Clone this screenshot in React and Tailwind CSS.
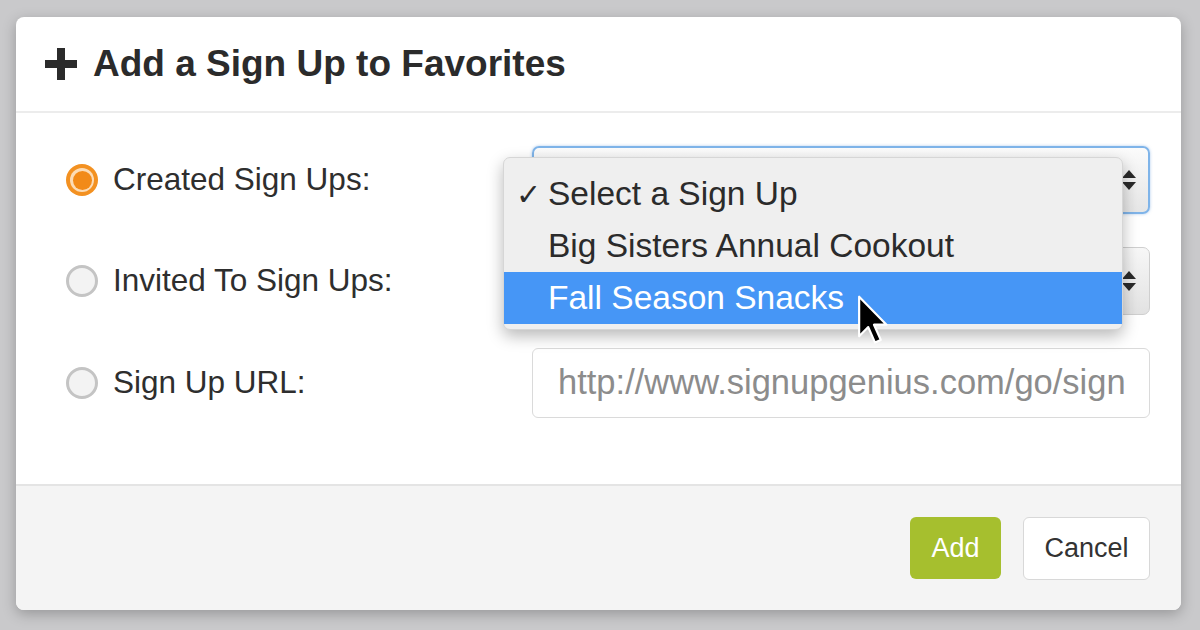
import React from "react";

const Arrows = () => (
  <svg width="16" height="22" viewBox="0 0 16 22" className="shrink-0">
    <path d="M8 1 L15 9 L1 9 Z" fill="#2a2a2a" />
    <path d="M1 13 L15 13 L8 21 Z" fill="#2a2a2a" />
  </svg>
);

const Radio = ({ checked }) =>
  checked ? (
    <div className="w-[32px] h-[32px] rounded-full bg-[#f39121] flex items-center justify-center shrink-0">
      <div className="w-[24px] h-[24px] rounded-full bg-[#fcdcb6] flex items-center justify-center">
        <div className="w-[19px] h-[19px] rounded-full bg-[#f28a18]" />
      </div>
    </div>
  ) : (
    <div className="w-[32px] h-[32px] rounded-full border-[3px] border-[#c4c4c4] bg-[#f3f3f3] shrink-0" />
  );

const Row = ({ checked, label, children }) => (
  <div className="flex items-center">
    <div className="w-[516px] pl-[50px] flex items-center gap-[15px]">
      <Radio checked={checked} />
      <span className="text-[31.5px] text-[#2e2e2e]">{label}</span>
    </div>
    <div className="w-[618px]">{children}</div>
  </div>
);

export default function App() {
  return (
    <div className="w-[1200px] h-[630px] bg-[#c9c9cb] pt-[17px] pl-[16px] font-['Liberation_Sans',Arial,sans-serif]">
      <div className="relative w-[1165px] h-[593px] bg-white rounded-[8px] shadow-[0_4px_14px_rgba(0,0,0,0.25)] flex flex-col overflow-hidden">
        {/* header */}
        <div className="h-[96px] shrink-0 border-b-2 border-[#ececec] flex items-center pl-[29px] gap-[16px]">
          <svg width="32" height="32" viewBox="0 0 32 32">
            <path d="M12 0 H20 V12 H32 V20 H20 V32 H12 V20 H0 V12 H12 Z" fill="#2b2b2b" />
          </svg>
          <h1 className="text-[37px] font-bold text-[#2b2b2b]">Add a Sign Up to Favorites</h1>
        </div>

        {/* body */}
        <div className="flex-1 flex flex-col gap-[33px] pt-[33px]">
          <Row checked label="Created Sign Ups:">
            <div className="h-[68px] rounded-[7px] border-2 border-[#7fb4e9] shadow-[0_0_3px_rgba(90,150,220,0.5)] bg-gradient-to-b from-[#fbfbfb] to-[#e6e6e6] flex items-center justify-end pr-[11px]">
              <Arrows />
            </div>
          </Row>
          <Row label="Invited To Sign Ups:">
            <div className="h-[68px] rounded-[7px] border border-[#cfcfcf] bg-gradient-to-b from-[#f7f7f7] to-[#e2e2e2] flex items-center justify-end pr-[12px]">
              <Arrows />
            </div>
          </Row>
          <Row label="Sign Up URL:">
            <div className="h-[70px] rounded-[6px] border border-[#dadada] bg-white flex items-center pl-[25px] pr-[24px] overflow-hidden">
              <span className="text-[34.5px] text-[#8c8c8c] whitespace-nowrap overflow-hidden">
                http://www.signupgenius.com/go/sign
              </span>
            </div>
          </Row>
        </div>

        {/* footer */}
        <div className="h-[126px] shrink-0 border-t-2 border-[#e4e4e4] bg-[#f4f4f4] flex items-center justify-end pr-[31px] gap-[22px]">
          <button className="w-[91px] h-[62px] rounded-[6px] bg-[#a6bf2e] text-white text-[27px]">Add</button>
          <button className="w-[127px] h-[63px] rounded-[6px] bg-white border border-[#d8d8d8] text-[#333] text-[27px]">
            Cancel
          </button>
        </div>

        {/* open dropdown menu */}
        <div className="absolute left-[487px] top-[140px] w-[620px] h-[173px] rounded-[7px] bg-[#efefef] border border-[#d6d6d6] shadow-[0_6px_16px_rgba(0,0,0,0.28)] pt-[10px] flex flex-col text-[33.5px] text-[#2b2b2b]">
          <div className="h-[52px] flex items-center">
            <span className="w-[44px] pl-[12px] text-[30px] font-bold font-['DejaVu_Sans',sans-serif]">✓</span>
            <span>Select a Sign Up</span>
          </div>
          <div className="h-[52px] flex items-center pl-[44px]">Big Sisters Annual Cookout</div>
          <div className="h-[52px] flex items-center pl-[44px] bg-[#4696f6] text-white">Fall Season Snacks</div>
        </div>

        {/* mouse pointer */}
        <svg
          className="absolute left-[841px] top-[278px]"
          width="34"
          height="54"
          viewBox="0 0 20 32"
        >
          <path
            d="M1.2 1 L1.2 24.5 L6.6 19 L10.6 28.2 L14 26.6 L10 17.6 L17.4 17.6 Z"
            fill="#000"
            stroke="#fff"
            strokeWidth="1.3"
            strokeLinejoin="round"
          />
        </svg>
      </div>
    </div>
  );
}
